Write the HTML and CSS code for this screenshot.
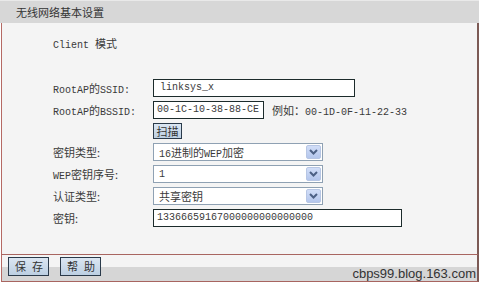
FILE: index.html
```html
<!DOCTYPE html>
<html>
<head>
<meta charset="utf-8">
<link rel="stylesheet" href="styles.css">
</head>
<body>
<div class="panel">
  <div class="header">无线网络基本设置</div>
  <div class="content">
    <div class="mode">Client <span class="c">模式</span></div>
    <div class="form">
      <div class="row"><span class="label">RootAP<span class="c">的</span>SSID:</span><span class="input ssid">linksys_x</span></div>
      <div class="row"><span class="label">RootAP<span class="c">的</span>BSSID:</span><span class="input bssid">00-1C-10-38-88-CE</span><span class="hint"><span class="c">例如：</span>00-1D-0F-11-22-33</span></div>
      <div class="row short"><span class="label"></span><span class="btn scan">扫描</span></div>
      <div class="row"><span class="label c">密钥类型:</span><span class="select"><span class="val">16<span class="c">进制的</span>WEP<span class="c">加密</span></span><span class="arrow"><svg width="9" height="6" viewBox="0 0 9 6"><path d="M1 1 L4.5 4.5 L8 1" fill="none" stroke="#4d6185" stroke-width="2"/></svg></span></span></div>
      <div class="row"><span class="label">WEP<span class="c">密钥序号:</span></span><span class="select"><span class="val">1</span><span class="arrow"><svg width="9" height="6" viewBox="0 0 9 6"><path d="M1 1 L4.5 4.5 L8 1" fill="none" stroke="#4d6185" stroke-width="2"/></svg></span></span></div>
      <div class="row"><span class="label c">认证类型:</span><span class="select"><span class="val c">共享密钥</span><span class="arrow"><svg width="9" height="6" viewBox="0 0 9 6"><path d="M1 1 L4.5 4.5 L8 1" fill="none" stroke="#4d6185" stroke-width="2"/></svg></span></span></div>
      <div class="row"><span class="label c">密钥:</span><span class="input key">13366659167000000000000000</span></div>
    </div>
  </div>
  <div class="footer">
    <span class="btn fbtn">保存</span>
    <span class="btn fbtn">帮助</span>
    <span class="watermark">cbps99.blog.163.com</span>
  </div>
</div>
</body>
</html>
```
FILE: styles.css
```css
* { box-sizing: border-box; }
body {
  margin: 0;
  background: #ffffff;
  font-family: "Liberation Mono", "Noto Sans CJK SC", monospace;
  font-size: 10px;
  color: #3a3a3a;
}
.c {
  font-family: "Noto Sans CJK SC", sans-serif;
  font-size: 11px;
}
.panel {
  width: 479px;
  height: 282px;
  position: relative;
  display: flex;
  flex-direction: column;
}
.header {
  height: 23px;
  background: #d7d7d7;
  border-top: 1px solid #e9e9e9;
  padding-left: 16px;
  line-height: 22px;
  font-family: "Noto Sans CJK SC", sans-serif;
  font-size: 11px;
  color: #333;
}
.content {
  height: 231px;
  background: #f4f4f4;
  border-left: 1px solid #b56a64;
  border-right: 2px solid #7c5a55;
  margin-left: 1px;
  padding: 11px 0 0 51px;
}
.mode { height: 18px; line-height: 18px; }
.form {
  margin-top: 27px;
  display: flex;
  flex-direction: column;
  gap: 4px;
}
.row {
  display: flex;
  align-items: center;
  height: 18px;
}
.row.short { height: 16px; }
.label {
  width: 100px;
  flex: none;
}
.input {
  height: 18px;
  border: 1px solid #1c2b2b;
  background: #fff;
  padding: 0 6px;
  line-height: 16px;
  white-space: nowrap;
  overflow: hidden;
}
.ssid { width: 202px; }
.bssid { width: 111px; padding: 0 3px; }
.key { width: 249px; padding: 0 3px; }
.hint { margin-left: 8px; }
.btn {
  display: inline-block;
  border: 1px solid #2a3a4a;
  background: linear-gradient(#dbe6f2, #bccfe2);
  font-family: "Noto Sans CJK SC", sans-serif;
  font-size: 11px;
  color: #333;
  text-align: center;
  white-space: nowrap;
}
.scan {
  width: 29px;
  height: 16px;
  line-height: 14px;
}
.select {
  width: 170px;
  height: 18px;
  border: 1px solid #8fa1b3;
  background: #fff;
  display: flex;
  align-items: center;
  justify-content: space-between;
  padding: 0 1px 0 5px;
}
.arrow {
  width: 15px;
  height: 14px;
  background: linear-gradient(#d2def8, #b4c6ec);
  border: 1px solid #b7c6e4;
  border-radius: 2px;
  display: flex;
  align-items: center;
  justify-content: center;
}
.footer {
  height: 28px;
  border-top: 1px solid #a86560;
  border-bottom: 1px solid #a86560;
  border-left: 1px solid #b56a64;
  border-right: 2px solid #7c5a55;
  margin-left: 1px;
  background: linear-gradient(#f4f4f4 0, #f4f4f4 12px, #d6d6d6 12px);
  padding: 2px 0 0 6px;
  display: flex;
  gap: 11px;
  align-items: flex-start;
}
.fbtn {
  width: 41px;
  height: 19px;
  line-height: 17px;
  letter-spacing: 6px;
  padding: 0 0 0 6px;
}
.watermark {
  position: absolute;
  right: 3px;
  bottom: 1px;
  font-family: "Liberation Sans", sans-serif;
  font-size: 13px;
  color: #333;
  line-height: 14px;
}
```
